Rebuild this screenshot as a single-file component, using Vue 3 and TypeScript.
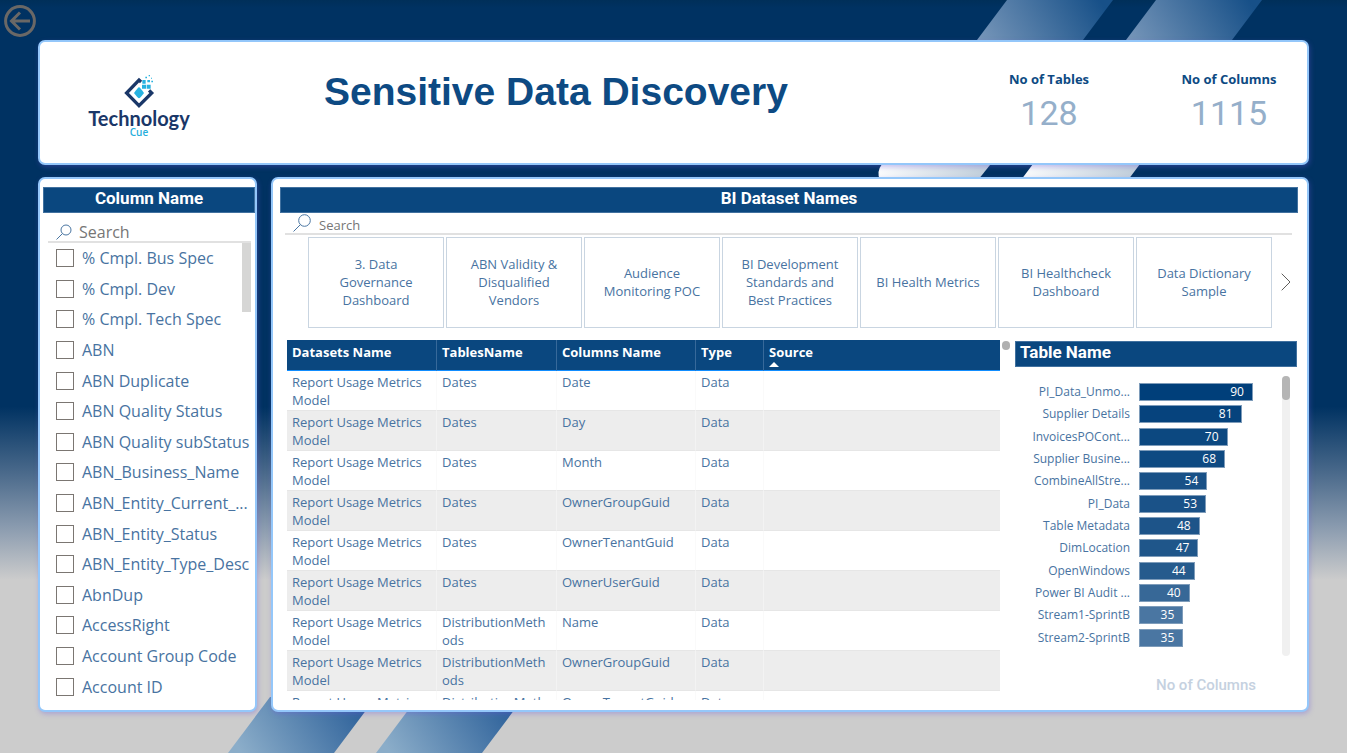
<script setup lang="ts">
import { ref } from 'vue'

interface Kpi { label: string; value: number }
interface Row { dataset: string; table: string; column: string; type: string; source: string }
interface Bar { name: string; value: number; color: string }

const kpis: Kpi[] = [
  { label: 'No of Tables', value: 128 },
  { label: 'No of Columns', value: 1115 },
]

const columnNames: string[] = [
  '% Cmpl. Bus Spec', '% Cmpl. Dev', '% Cmpl. Tech Spec', 'ABN', 'ABN Duplicate',
  'ABN Quality Status', 'ABN Quality subStatus', 'ABN_Business_Name', 'ABN_Entity_Current_...',
  'ABN_Entity_Status', 'ABN_Entity_Type_Desc', 'AbnDup', 'AccessRight', 'Account Group Code', 'Account ID',
]

const datasets: string[] = [
  '3. Data Governance Dashboard', 'ABN Validity & Disqualified Vendors', 'Audience Monitoring POC',
  'BI Development Standards and Best Practices', 'BI Health Metrics', 'BI Healthcheck Dashboard',
  'Data Dictionary Sample',
]

const entries: [string, string][] = [
  ['Dates', 'Date'], ['Dates', 'Day'], ['Dates', 'Month'], ['Dates', 'OwnerGroupGuid'],
  ['Dates', 'OwnerTenantGuid'], ['Dates', 'OwnerUserGuid'], ['DistributionMethods', 'Name'],
  ['DistributionMethods', 'OwnerGroupGuid'], ['DistributionMethods', 'OwnerTenantGuid'],
]
const rows: Row[] = entries.map(([table, column]) => ({
  dataset: 'Report Usage Metrics Model', table, column, type: 'Data', source: '',
}))

const bars: Bar[] = [
  { name: 'PI_Data_Unmo...', value: 90, color: '#003f7a' },
  { name: 'Supplier Details', value: 81, color: '#06437d' },
  { name: 'InvoicesPOCont...', value: 70, color: '#0c4880' },
  { name: 'Supplier Busine...', value: 68, color: '#0e4a82' },
  { name: 'CombineAllStre...', value: 54, color: '#195187' },
  { name: 'PI_Data', value: 53, color: '#1a5288' },
  { name: 'Table Metadata', value: 48, color: '#1d5489' },
  { name: 'DimLocation', value: 47, color: '#1f568a' },
  { name: 'OpenWindows', value: 44, color: '#265b8d' },
  { name: 'Power BI Audit ...', value: 40, color: '#376897' },
  { name: 'Stream1-SprintB', value: 35, color: '#4a76a2' },
  { name: 'Stream2-SprintB', value: 35, color: '#4a76a2' },
]
const axisMax = 113

const columnSearch = ref('')
const datasetSearch = ref('')
const checked = ref<string[]>([])
</script>

<template>
  <div class="page">
    <svg class="stripes stripes-top" viewBox="0 0 400 180" aria-hidden="true">
      <defs>
        <linearGradient id="top-fade" gradientUnits="userSpaceOnUse" x1="30" y1="50" x2="140" y2="-20">
          <stop offset="0" stop-color="#7c9abc" />
          <stop offset="1" stop-color="#175088" />
        </linearGradient>
        <linearGradient id="low-fade" x1="0" y1="0" x2="1" y2="0">
          <stop offset="0" stop-color="#fbfcfd" />
          <stop offset="1" stop-color="#bccbd8" />
        </linearGradient>
      </defs>
      <g id="beam">
        <path d="M60 0H166L136 40H30Z" fill="url(#top-fade)" />
      </g>
      <use href="#beam" x="149" />
      <path d="M-57 160H47L31 180H-67Q-71 172 -65 164Z" fill="url(#low-fade)" />
      <path d="M89 160H196L181 180H74Z" fill="url(#low-fade)" />
    </svg>
    <svg class="stripes stripes-bottom" viewBox="0 0 300 56" aria-hidden="true">
      <defs>
        <linearGradient id="foot-fade" gradientUnits="userSpaceOnUse" x1="20" y1="66" x2="130" y2="0">
          <stop offset="0" stop-color="#8badc9" />
          <stop offset="1" stop-color="#2c6099" />
        </linearGradient>
      </defs>
      <g id="foot-beam"><path d="M42 0H148L106 56H0Z" fill="url(#foot-fade)" /></g>
      <use href="#foot-beam" x="148" />
    </svg>

    <nav class="topbar">
      <button class="back" type="button" aria-label="Back">
        <svg viewBox="0 0 32 32" width="32" height="32" fill="none" stroke="#6a6866" stroke-width="3">
          <circle cx="16" cy="16" r="14.4" />
          <path d="M26 16H8M16 7.5L7.500 16L16 24.500" />
        </svg>
      </button>
    </nav>

    <header class="panel header">
      <div class="logo">
        <svg viewBox="129 30 96 105" width="32" height="35" aria-hidden="true">
          <path d="M184 50L177 43.500L135 87L177 130L220 87L211 78" transform="translate(177 87) scale(.89) translate(-177 -87)" fill="none" stroke="#1a3768" stroke-width="11" />
          <path d="M177 70Q180 70 192 87Q180 103 177 103Q174 103 162 87Q174 70 177 70Z" fill="#27b2e0" />
          <g fill="#27b2e0">
            <path d="M186 62h12v12h-12zM200 62h12v12h-12zM187 48h10v11h-10zM202 48h8v7h-8zM214 50h5v5h-5zM196 38h5v5h-5zM206 33h4v4h-4zM213 41h3v3h-3z" />
          </g>
        </svg>
        <span class="logo-name">Technology</span>
        <span class="logo-sub">Cue</span>
      </div>
      <h1>Sensitive Data Discovery</h1>
      <dl class="kpis">
        <div v-for="k in kpis" :key="k.label" class="kpi">
          <dt>{{ k.label }}</dt>
          <dd>{{ k.value }}</dd>
        </div>
      </dl>
    </header>

    <div class="content">
      <aside class="panel side">
        <h2 class="bar-title">Column Name</h2>
        <label class="search side-search">
          <svg viewBox="0 0 16 16" width="16" height="16" fill="none" stroke="#4a76a2"><circle cx="10" cy="6" r="5" /><path d="M6.500 9.500L.5 15.500" /></svg>
          <input v-model="columnSearch" type="text" placeholder="Search" aria-label="Search column names">
        </label>
        <div class="options">
          <label v-for="name in columnNames" :key="name" class="option">
            <input v-model="checked" type="checkbox" :value="name">
            <span>{{ name }}</span>
          </label>
          <span class="side-thumb"></span>
        </div>
      </aside>

      <main class="panel main">
        <h2 class="bar-title">BI Dataset Names</h2>
        <label class="search main-search">
          <svg viewBox="0 0 18 18" width="18" height="18" fill="none" stroke="#4a76a2"><circle cx="11.500" cy="6.500" r="5.800" /><path d="M7.500 10.500L.5 17.500" /></svg>
          <input v-model="datasetSearch" type="text" placeholder="Search" aria-label="Search datasets">
        </label>
        <div class="carousel">
          <button v-for="d in datasets" :key="d" class="tile" type="button"><span>{{ d }}</span></button>
          <button class="next" type="button" aria-label="Next datasets">
            <svg viewBox="0 0 10 18" width="10" height="18" fill="none" stroke="#605e5c"><path d="M.7 .7L9 9L.7 17.300" /></svg>
          </button>
        </div>

        <div class="lower">
          <div class="table-wrap">
            <table>
              <colgroup><col class="c-dataset"><col class="c-table"><col class="c-column"><col class="c-type"><col></colgroup>
              <thead>
                <tr>
                  <th scope="col">Datasets Name</th>
                  <th scope="col">TablesName</th>
                  <th scope="col">Columns Name</th>
                  <th scope="col">Type</th>
                  <th scope="col" aria-sort="ascending">Source<svg class="sort" viewBox="0 0 10 5" width="10" height="5"><path d="M0 5L5 0L10 5Z" fill="#fff" /></svg></th>
                </tr>
              </thead>
              <tbody>
                <tr v-for="(r, i) in rows" :key="i">
                  <td>{{ r.dataset }}</td>
                  <td>{{ r.table }}</td>
                  <td>{{ r.column }}</td>
                  <td>{{ r.type }}</td>
                  <td>{{ r.source }}</td>
                </tr>
              </tbody>
            </table>
          </div>
          <span class="table-thumb"></span>
          <section class="chart">
            <h2 class="bar-title chart-title">Table Name</h2>
            <div class="chart-body">
              <ul>
                <li v-for="b in bars" :key="b.name">
                  <span class="bar-name">{{ b.name }}</span>
                  <span class="track">
                    <span class="bar" :style="{ width: (b.value / axisMax) * 100 + '%', background: b.color }">{{ b.value }}</span>
                  </span>
                </li>
              </ul>
              <span class="rail"><span class="rail-thumb"></span></span>
            </div>
            <p class="axis">No of Columns</p>
          </section>
        </div>
      </main>
    </div>
  </div>
</template>

<style>
body {
  margin: 0;
}
</style>

<style scoped>
* {
  box-sizing: border-box;
}
.page {
  position: relative;
  display: flex;
  flex-direction: column;
  height: 100vh;
  min-height: 700px;
  overflow: hidden;
  background: linear-gradient(#002f59 0, #003262 8px, #003262 54%, #4c6b8c 63%, #8a9baf 70%, #cccccc 77%);
  font-family: "Open Sans", "Noto Sans", sans-serif;
  color: #4873a1;
}
.stripes {
  position: absolute;
  overflow: visible;
}
.stripes-top {
  top: 0;
  right: 0;
  width: 400px;
  height: 180px;
}
.stripes-bottom {
  bottom: 0;
  left: 228px;
  width: 300px;
  height: 56px;
}
button {
  font: inherit;
  color: inherit;
  background: none;
  border: 0;
  padding: 0;
  cursor: pointer;
}
.topbar {
  position: relative;
  height: 40px;
  padding: 5px 4px;
}
.back {
  display: block;
  width: 32px;
  height: 32px;
}
.back svg {
  display: block;
}
.panel {
  position: relative;
  background: #fff;
  border: 2px solid #94c7fa;
  border-radius: 7px;
  box-shadow: 1px 2px 5px rgba(110, 90, 220, 0.35);
}
.header {
  display: flex;
  align-items: flex-start;
  height: 125px;
  margin: 0 38px 12px;
}
.logo {
  display: flex;
  flex-direction: column;
  align-items: center;
  width: 198px;
  padding-top: 32px;
}
.logo-name {
  font: 700 20px/18px Lato, sans-serif;
  color: #1a3768;
}
.logo-sub {
  font-size: 10px;
  font-weight: 600;
  line-height: 10px;
  color: #27aedc;
}
h1 {
  margin: 26px 0 0 86px;
  font: 700 39px/48px "Liberation Sans", Arial, sans-serif;
  color: #0d4a83;
}
.kpis {
  display: flex;
  gap: 24px;
  margin: 28px 0 0 auto;
  text-align: center;
}
.kpi {
  width: 156px;
}
.kpi dt {
  font-size: 13px;
  font-weight: 700;
  line-height: 18px;
  color: #0d4a83;
}
.kpi dd {
  margin: 5px 0 0;
  font: 400 34px/40px Roboto, sans-serif;
  color: #95afca;
}
.content {
  display: grid;
  grid-template-columns: 219px minmax(0, 1fr);
  gap: 14px;
  flex: 1;
  min-height: 0;
  margin: 0 38px 41px;
}
.side {
  display: flex;
  flex-direction: column;
  min-height: 0;
  padding: 8px 0 8px 3px;
}
.bar-title {
  flex: none;
  height: 26px;
  margin: 0;
  border: 1px solid #41719f;
  background: #0a477f;
  color: #fff;
  font: 700 17px/20px Roboto, sans-serif;
  text-align: center;
}
.search {
  display: flex;
  align-items: center;
  flex: none;
  border-bottom: 2px solid #e1e1e1;
}
.search input {
  flex: 1;
  min-width: 0;
  padding: 0;
  border: 0;
  outline: 0;
  background: none;
  font: inherit;
  color: #666;
}
.search input::placeholder {
  color: #767676;
  opacity: 1;
}
.side-search {
  gap: 7px;
  height: 30px;
  margin: 0 4px 0 5px;
  padding: 9px 0 0 8px;
  font-size: 16px;
}
.options {
  position: relative;
  display: flex;
  flex-direction: column;
  flex: 1;
  min-height: 0;
}
.option {
  display: flex;
  align-items: center;
  flex: 1;
  gap: 8px;
  padding-left: 13px;
  font-size: 16px;
  line-height: 22px;
  white-space: nowrap;
}
.option input {
  appearance: none;
  width: 18px;
  height: 18px;
  margin: 0;
  border: 1px solid #7b7672;
  background: #fff;
}
.option input:checked {
  background: #0a477f;
}
.side-thumb {
  position: absolute;
  top: 0;
  right: 4px;
  width: 9px;
  height: 69px;
  background: #d6d6d5;
}
.main {
  display: flex;
  flex-direction: column;
  min-width: 0;
  min-height: 0;
  padding: 8px 9px 10px 7px;
}
.main-search {
  gap: 8px;
  height: 22px;
  margin: 0 6px 0 5px;
  padding-left: 8px;
  font-size: 13px;
}
.main-search input {
  padding-top: 3px;
}
.carousel {
  display: flex;
  flex: none;
  gap: 2px;
  height: 91px;
  margin: 2px 7px 0 28px;
}
.tile {
  flex: 1;
  min-width: 0;
  padding: 0 12px 2px;
  border: 1px solid #c9d5e1;
  font-size: 13px;
  line-height: 18px;
}
.tile span {
  display: block;
  max-width: 110px;
  margin: 0 auto;
}
.next {
  display: flex;
  align-items: center;
  justify-content: flex-end;
  width: 17px;
  padding-bottom: 2px;
}
.lower {
  display: flex;
  flex: 1;
  min-height: 0;
  margin: 12px 1px 0 7px;
}
.table-wrap {
  flex: 1;
  min-width: 0;
  overflow: hidden;
}
table {
  width: 100%;
  table-layout: fixed;
  border-collapse: separate;
  border-spacing: 0;
  font-size: 13px;
  line-height: 18px;
}
.c-dataset {
  width: 149px;
}
.c-table {
  width: 120px;
}
.c-column {
  width: 139px;
}
.c-type {
  width: 68px;
}
th,
td {
  vertical-align: top;
  text-align: left;
  overflow-wrap: anywhere;
}
th {
  height: 31px;
  padding: 3px 5px 0;
  background: #0a477f;
  border-bottom: 1px solid #118dff;
  color: #fff;
  font-weight: 700;
}
th + th {
  border-left: 1px solid #37699a;
}
.sort {
  display: block;
  margin-top: 1px;
}
td {
  height: 40px;
  padding: 2px 5px 0;
  border-bottom: 1px solid #e6e6e6;
}
td + td {
  border-left: 1px solid #fafafa;
}
tbody tr:nth-child(even) td {
  background: #ededed;
}
tbody tr:nth-child(even) td + td {
  border-left-color: #f3f3f3;
}
.table-thumb {
  width: 8px;
  height: 9px;
  margin: 1px 5px 0 2px;
  border-radius: 4px;
  background: #b0b0b0;
}
.chart {
  display: flex;
  flex-direction: column;
  width: 282px;
  padding-top: 1px;
}
.chart-title {
  padding-left: 4px;
  text-align: left;
}
.chart-body {
  display: flex;
  flex: 1;
  min-height: 0;
  margin-top: 9px;
}
.chart ul {
  display: flex;
  flex-direction: column;
  flex: 1;
  margin: 5px 0 7px;
  padding: 0;
  list-style: none;
}
.chart li {
  display: flex;
  align-items: center;
  flex: 1;
  gap: 9px;
  font-size: 12px;
  line-height: 18px;
}
.bar-name {
  width: 115px;
  text-align: right;
  white-space: nowrap;
}
.track {
  flex: 1;
}
.bar {
  display: block;
  height: 18px;
  padding-right: 8px;
  border: 1px solid #7e9cba;
  color: #fff;
  line-height: 16px;
  text-align: right;
}
.rail {
  width: 8px;
  margin-right: 7px;
  border-radius: 4px;
  background: #f0f0f0;
}
.rail-thumb {
  display: block;
  height: 24px;
  border-radius: 4px;
  background: #b5b5b5;
}
.axis {
  margin: 19px 0 5px 100px;
  font: 500 15px/20px Roboto, sans-serif;
  color: #c5d1e0;
  text-align: center;
}
</style>
